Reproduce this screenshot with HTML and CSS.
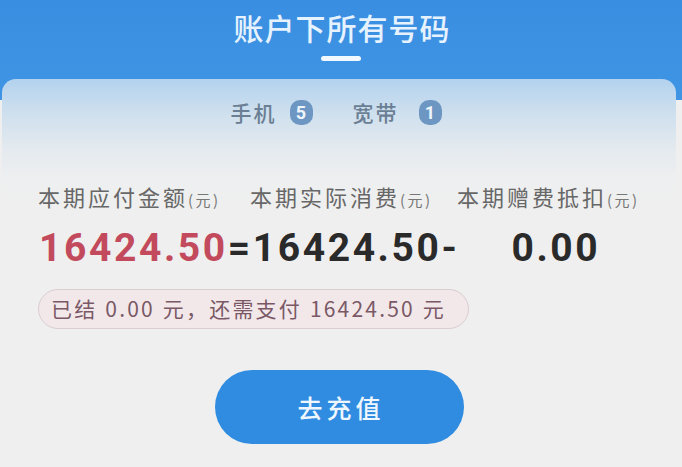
FILE: index.html
```html
<!DOCTYPE html>
<html lang="zh">
<head>
<meta charset="utf-8">
<link rel="stylesheet" href="styles.css">
</head>
<body>
<div class="page">
  <header class="top">
    <div class="title">账户下所有号码</div>
    <div class="underline"></div>
  </header>
  <section class="card">
    <div class="tabs">
      <span class="tab">手机</span><span class="badge">5</span>
      <span class="tab tab2">宽带</span><span class="badge badge2">1</span>
    </div>
    <div class="labels">
      <div class="label l1">本期应付金额<small>(元)</small></div>
      <div class="label l2">本期实际消费<small>(元)</small></div>
      <div class="label l3">本期赠费抵扣<small>(元)</small></div>
    </div>
    <div class="nums">
      <span class="n red">16424.50</span><span class="n dark">=16424.50-</span><span class="n dark zero">0.00</span>
    </div>
    <div class="pill">已结 0.00 元，还需支付 16424.50 元</div>
    <div class="btnrow"><div class="btn">去充值</div></div>
  </section>
</div>
</body>
</html>
```
FILE: styles.css
```css
* { box-sizing: border-box; }
html, body { margin: 0; padding: 0; }
body {
  width: 682px; height: 467px; overflow: hidden;
  background: #efefef;
  font-family: "Noto Sans CJK SC", "Noto Sans", sans-serif;
}
.page { position: relative; width: 682px; height: 467px; background: #efefef; }
.top {
  height: 100px;
  background: linear-gradient(180deg, #3a8ee1 0%, #3f95e4 100%);
  display: flex; flex-direction: column; align-items: center;
  padding-top: 6px;
}
.title {
  color: #e6f3ff; font-size: 30px; line-height: 42px; letter-spacing: 1px;
  margin-left: 2px; font-weight: 500;
}
.underline {
  width: 40px; height: 5px; border-radius: 3px; background: #f2f8ff;
  margin-top: 8px;
}
.card {
  margin: -21px 6px 0 2px;
  height: 388px;
  border-radius: 14px 14px 0 0;
  background: linear-gradient(180deg, #b3d2ee 0px, #cfe0ee 35px, #e4eaef 70px, #eeeff0 100px, #efefef 130px);
  padding-top: 18px;
}
.tabs {
  display: flex; align-items: center; justify-content: center;
  height: 30px; color: #6b7f94; font-size: 21px; letter-spacing: 2px;
  padding-right: 6px; font-weight: 500;
}
.tab2 { margin-left: 40px; }
.badge {
  display: inline-flex; align-items: center; justify-content: center;
  width: 23px; height: 25px; border-radius: 10px;
  background: #6d97c2; color: #eef5fc; font-family: "Roboto", sans-serif; font-weight: 700;
  font-size: 18px; margin-left: 13px; letter-spacing: 0;
}
.badge2 { margin-left: 20px; }
.labels {
  display: flex; margin-top: 54px; padding-left: 36px;
  color: #676767; font-size: 22px; line-height: 30px;
}
.label { white-space: nowrap; letter-spacing: 3px; }
.label small { font-size: 15px; margin-left: 0; letter-spacing: 2.5px; color: #777; }
.l1 { width: 212px; }
.l2 { width: 207px; }
.nums {
  display: flex; padding-left: 37px; margin-top: 9px;
  font-family: "Roboto", sans-serif; font-weight: 700; font-size: 39px; line-height: 48px;
  letter-spacing: 2.6px;
}
.red { color: #c24a5c; }
.dark { color: #2a2a2a; }
.zero { margin-left: 52px; }
.pill {
  margin: 17px 0 0 36px; width: 431px; height: 40px;
  border: 1.5px solid #d9cdd0; border-radius: 20px;
  background: #f2e8ea; color: #7a5866;
  font-size: 21px; line-height: 37px; padding-left: 12px; white-space: nowrap;
  letter-spacing: 2.2px; word-spacing: 1px;
}
.btnrow { display: flex; justify-content: center; margin-top: 41px; }
.btn {
  width: 249px; height: 74px; border-radius: 37px;
  background: #2f8ce0; color: #eef6ff;
  font-size: 25px; display: flex; align-items: center; justify-content: center;
  letter-spacing: 4px; padding-left: 4px; font-weight: 500;
}
```
